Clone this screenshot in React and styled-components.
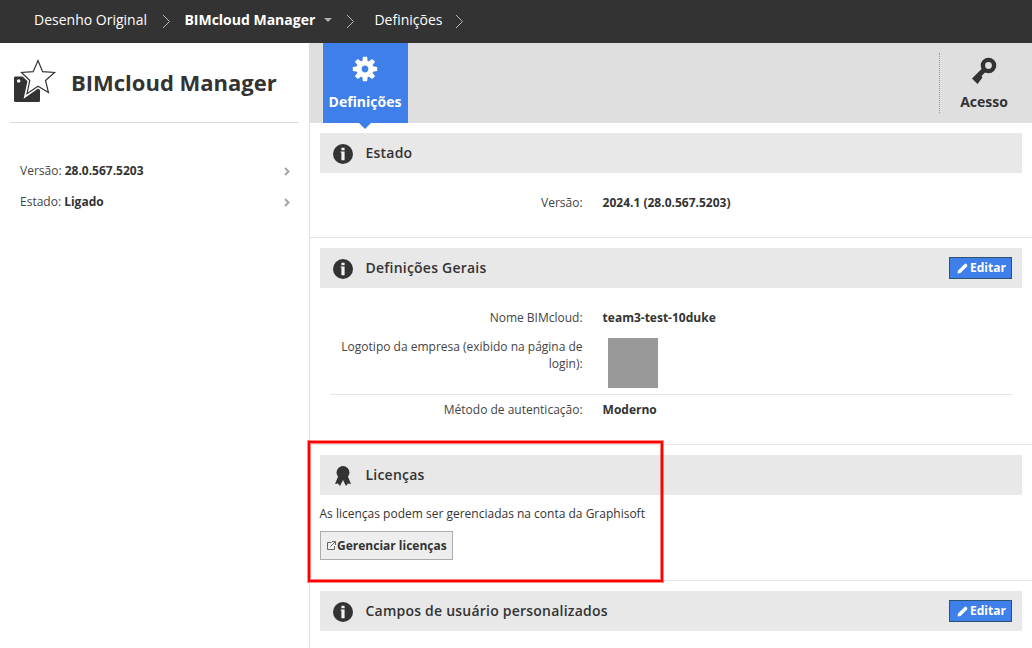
import React from "react"
import styled, { createGlobalStyle } from "styled-components"

const GlobalStyle = createGlobalStyle`
	* {
		box-sizing: border-box;
	}

	body {
		margin: 0;
		background: #FFFFFF;
		color: #333333;
		font-family: "Open Sans", "Noto Sans", sans-serif;
		font-size: 12px;
		line-height: 17px;
	}
`

const Page = styled.div`
	display: flex;
	flex-direction: column;
	height: 648px;
	overflow: hidden;
`

const TopBar = styled.nav`
	display: flex;
	align-items: center;
	flex: none;
	height: 43px;
	padding: 0 0 3px 34px;
	background: #333333;
	color: #FFFFFF;
	font-size: 14px;
	line-height: 20px;
	white-space: nowrap;
`

const Crumb = styled.span`
	width: ${props => props.$width}px;
	font-weight: ${props => props.$active ? 700 : 400};
`

const CrumbArrow = styled.svg`
	flex: none;
	width: 9px;
	height: 15px;
	margin: 2px ${props => props.$after || 0}px 0 ${props => props.$before || 0}px;
	fill: none;
	stroke: #B8B8B8;
`

const Caret = styled.span`
	margin-left: 9px;
	border: 4.5px solid transparent;
	border-top-color: #B0B0B0;
	border-bottom: 0;
`

const Body = styled.div`
	display: flex;
	flex: 1;
	min-height: 0;
`

const Sidebar = styled.aside`
	flex: none;
	width: 310px;
	padding: 0 10px;
	border-right: 1px solid #DFDFDF;
`

const SidebarTitle = styled.header`
	display: flex;
	align-items: center;
	height: 80px;
	border-bottom: 1px solid #DBDBDB;

	svg {
		flex: none;
		width: 44px;
		height: 46px;
		margin: -3px 0 0 3px;
	}
`

const Heading = styled.h1`
	margin: -2px 0 0 14px;
	font-size: 22px;
	font-weight: 700;
	line-height: 30px;
	white-space: nowrap;
`

const InfoList = styled.div`
	padding: 32px 9px 0 10px;
`

const InfoLink = styled.div`
	display: flex;
	align-items: center;
	justify-content: space-between;
	height: 31px;
	color: #444444;

	b {
		color: #333333;
	}

	svg {
		width: 6px;
		height: 9px;
		margin-top: 1px;
		fill: none;
		stroke: #A5A5A5;
		stroke-width: 2;
	}
`

const Main = styled.main`
	flex: 1;
	min-width: 0;
`

const Toolbar = styled.div`
	display: flex;
	justify-content: space-between;
	height: 80px;
	margin-left: -1px;
	padding-left: 14px;
	background: #DFDFDF;
	font-size: 14px;
	font-weight: 700;
`

const Tab = styled.div`
	position: relative;
	display: flex;
	flex-direction: column;
	align-items: center;
	width: 85px;
	padding: 13px 1px 0 0;
	background: #3F7FE9;
	color: #FFFFFF;

	svg {
		width: 26px;
		height: 26px;
		margin-bottom: 11px;
	}

	&::after {
		content: "";
		position: absolute;
		top: 100%;
		border: 6px solid transparent;
		border-top-color: #3F7FE9;
		border-bottom: 0;
	}
`

const Access = styled.div`
	display: flex;
	flex-direction: column;
	align-items: center;
	width: 93px;
	height: 60px;
	margin-top: 10px;
	padding: 4px 4px 0 0;
	border-left: 1px dotted #999999;

	svg {
		width: 26px;
		height: 27px;
		margin-bottom: 9px;
	}
`

const Section = styled.section`
	height: ${props => props.$height}px;
	padding: 10px;
	border-bottom: 1px solid #E6E6E6;
`

const SectionHeader = styled.header`
	display: flex;
	align-items: center;
	height: 40px;
	padding: 0 10px 0 13px;
	background: #E8E8E8;

	> svg {
		width: 20px;
		height: 20px;
		margin-top: 1px;
	}
`

const SectionTitle = styled.h2`
	flex: 1;
	margin: 0 0 0 12.5px;
	font-size: 14px;
	font-weight: 600;
	line-height: 20px;
	letter-spacing: 0.22px;
`

const EditButton = styled.button`
	display: flex;
	align-items: center;
	justify-content: center;
	width: 63px;
	height: 22px;
	padding: 0 0 1px 2px;
	border: 1px solid #2C5370;
	background: #3F7FE9;
	color: #FFFFFF;
	font: 700 12px/17px "Open Sans", "Noto Sans", sans-serif;

	svg {
		width: 11px;
		height: 11px;
		margin: 2px 2px 0 0;
	}
`

const Fields = styled.div`
	padding: 21px 10px 0;
`

const Field = styled.div`
	display: grid;
	grid-template-columns: 252.6px 1fr;
	column-gap: 20px;
	margin-bottom: 12px;
`

const Label = styled.div`
	padding-left: 10px;
	color: #444444;
	text-align: right;
`

const Value = styled.div`
	font-weight: 700;
`

const LogoBox = styled.div`
	width: 50px;
	height: 50px;
	margin: 0 0 -6px 5.4px;
	background: #999999;
`

const Divider = styled.div`
	height: 1px;
	margin-bottom: 6px;
	background: #E6E6E6;
`

const LicenseNote = styled.p`
	margin: 10px 0 9px -0.5px;
`

const LicenseButton = styled.button`
	display: flex;
	align-items: center;
	width: 133px;
	height: 29px;
	padding: 0 0 0 5px;
	border: 1px solid #ACACAC;
	background: #EEEEEE;
	color: #333333;
	font: 700 12px/17px "Open Sans", "Noto Sans", sans-serif;
	white-space: nowrap;

	svg {
		flex: none;
		width: 11px;
		height: 11px;
	}
`

// Frame laid over the page around the license section
const Highlight = styled.div`
	position: absolute;
	left: 308px;
	top: 441px;
	width: 355px;
	height: 141px;
	border: 2px solid #FF0000;
	box-shadow: 0 0 0 1px rgba(255, 0, 0, 0.45), inset 0 0 0 1px rgba(255, 0, 0, 0.5);
	pointer-events: none;
`

const Arrow = (props) => (
	<CrumbArrow viewBox="0 0 9 15" {...props}>
		<path d="M1 1l6.500 6.500L1 14" />
	</CrumbArrow>
)

const ServerStar = () => (
	<svg viewBox="0 0 44 46">
		<path d="M3 18.500H27V42.500a1.500 1.500 0 0 1-1.500 1.500H2.500A1.500 1.500 0 0 1 1 42.500V20a1.500 1.500 0 0 1 2-1.500z" fill="#333" />
		<circle cx="5.700" cy="23" r="1.800" fill="#fff" />
		<path d="M25 2.500l4.600 11.200 12 .8-9.100 8 3 12-10.500-6.300-11.300 8 3-13.700-8.500-8 12-.8z" fill="#fff" stroke="#fff" strokeWidth="4" />
		<path d="M25 2.500l4.600 11.200 12 .8-9.100 8 3 12-10.500-6.300-11 7.500 2.800-13.200-8.300-8 11.700-.8z" fill="#fff" stroke="#333" strokeWidth="1.200" />
	</svg>
)

const GearIcon = () => (
	<svg viewBox="-13 -13 26 26">
		<circle r="6" fill="none" stroke="#fff" strokeWidth="5.200" />
		{[0, 45, 90, 135, 180, 225, 270, 315].map(angle => (
			<path key={angle} d="M-2.700 -7.500L-2.100 -12.200H2.100L2.700 -7.500z" fill="#fff" transform={`rotate(${angle})`} />
		))}
	</svg>
)

const KeyIcon = () => (
	<svg viewBox="0 0 26 27">
		<circle cx="17.500" cy="8.500" r="5.600" fill="none" stroke="#333" strokeWidth="4.400" />
		<path d="M12 10.500l3.500 3.500-5 5 1 1.500-5 6.500L1 21.500z" fill="#333" />
	</svg>
)

const InfoIcon = () => (
	<svg viewBox="0 0 20 20">
		<circle cx="10" cy="10" r="10" fill="#333" />
		<path d="M8.400 3.700h3.200v2.600H8.400zM7.600 7.500h4v8.700H8.400V8.600H7.600z" fill="#F2F2F2" />
	</svg>
)

const RibbonIcon = () => (
	<svg viewBox="0 0 20 20">
		<circle cx="10" cy="6.500" r="6.500" fill="#333" />
		<path d="M5.500 9.500L2 18l3-.5L7 20l3-6 3 6 2-2.500 3 .5-3.500-8.500z" fill="#333" />
	</svg>
)

const PencilIcon = () => (
	<svg viewBox="0 0 11 11">
		<path d="M.5 10.500l.6-3L7.600 1 8.900.6l1.500 1.500-.4 1.300-6.500 6.500z" fill="#fff" />
	</svg>
)

const ExternalIcon = () => (
	<svg viewBox="0 0 11 11" fill="none" stroke="#666">
		<path d="M5.500 2.500H1.500V9.500H8.500V6M4.500 6.500L9.500 1.500M6 1.500H9.500V5" />
	</svg>
)

const Chevron = () => (
	<svg viewBox="0 0 6 9">
		<path d="M1 1l3.500 3.500L1 8" />
	</svg>
)

const Edit = () => (
	<EditButton>
		<PencilIcon />
		Editar
	</EditButton>
)

const App = () => {
	return (
		<Page>
			<GlobalStyle />
			<TopBar>
				<Crumb $width={113}>Desenho Original</Crumb>
				<Arrow $before={15} $after={13.4} />
				<Crumb $width={131} $active>BIMcloud Manager</Crumb>
				<Caret />
				<Arrow $before={13.6} $after={19.4} />
				<Crumb $width={68}>Definições</Crumb>
				<Arrow $before={12.6} />
			</TopBar>
			<Body>
				<Sidebar>
					<SidebarTitle>
						<ServerStar />
						<Heading>BIMcloud Manager</Heading>
					</SidebarTitle>
					<InfoList>
						<InfoLink>
							<span>Versão: <b>28.0.567.5203</b></span>
							<Chevron />
						</InfoLink>
						<InfoLink>
							<span>Estado: <b>Ligado</b></span>
							<Chevron />
						</InfoLink>
					</InfoList>
				</Sidebar>
				<Main>
					<Toolbar>
						<Tab>
							<GearIcon />
							Definições
						</Tab>
						<Access>
							<KeyIcon />
							Acesso
						</Access>
					</Toolbar>
					<Section $height={115}>
						<SectionHeader>
							<InfoIcon />
							<SectionTitle>Estado</SectionTitle>
						</SectionHeader>
						<Fields>
							<Field>
								<Label>Versão:</Label>
								<Value>2024.1 (28.0.567.5203)</Value>
							</Field>
						</Fields>
					</Section>
					<Section $height={207}>
						<SectionHeader>
							<InfoIcon />
							<SectionTitle>Definições Gerais</SectionTitle>
							<Edit />
						</SectionHeader>
						<Fields>
							<Field>
								<Label>Nome BIMcloud:</Label>
								<Value>team3-test-10duke</Value>
							</Field>
							<Field>
								<Label>Logotipo da empresa (exibido na página de login):</Label>
								<LogoBox />
							</Field>
							<Divider />
							<Field>
								<Label>Método de autenticação:</Label>
								<Value>Moderno</Value>
							</Field>
						</Fields>
					</Section>
					<Section $height={136}>
						<SectionHeader>
							<RibbonIcon />
							<SectionTitle>Licenças</SectionTitle>
						</SectionHeader>
						<LicenseNote>As licenças podem ser gerenciadas na conta da Graphisoft</LicenseNote>
						<LicenseButton>
							<ExternalIcon />
							Gerenciar licenças
						</LicenseButton>
					</Section>
					<Section $height={80}>
						<SectionHeader>
							<InfoIcon />
							<SectionTitle>Campos de usuário personalizados</SectionTitle>
							<Edit />
						</SectionHeader>
					</Section>
				</Main>
			</Body>
			<Highlight />
		</Page>
	)
}

export default App
